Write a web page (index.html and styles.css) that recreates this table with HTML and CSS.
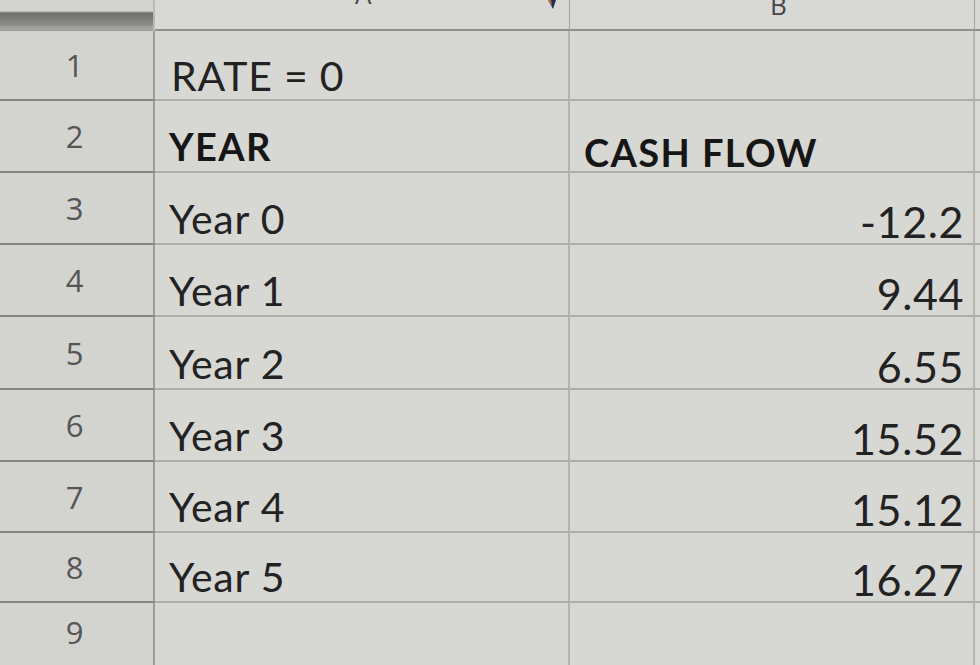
FILE: index.html
```html
<!DOCTYPE html>
<html lang="en">
<head>
<meta charset="utf-8">
<title>Sheet</title>
<link rel="stylesheet" href="styles.css">
</head>
<body>
<div class="sheet">
  <div class="corner"></div>
  <div class="colhead"><span class="col-letter a">A</span>
    <svg class="cursor" width="50" height="12" viewBox="0 0 50 12"><path d="M0 0 L8 0 L5 9 Z" fill="#1f2f5a"/><path d="M0 0 L3 0 L4 6 Z" fill="#c8742a"/><path d="M38 0 L48 0 L40 9 Z" fill="#1f2f5a"/></svg>
  </div>
  <div class="colhead"><span class="col-letter b">B</span></div>
  <div class="colhead edge"></div>

  <div class="rowhead r1">1</div>
  <div class="cell r1 text">RATE = 0</div>
  <div class="cell r1"></div>
  <div class="cell r1 edge"></div>

  <div class="rowhead r2">2</div>
  <div class="cell r2 text bold">YEAR</div>
  <div class="cell r2 text bold cash">CASH FLOW</div>
  <div class="cell r2 edge"></div>

  <div class="rowhead r3">3</div>
  <div class="cell r3 text">Year 0</div>
  <div class="cell r3 num">-12.2</div>
  <div class="cell r3 edge"></div>

  <div class="rowhead r4">4</div>
  <div class="cell r4 text">Year 1</div>
  <div class="cell r4 num">9.44</div>
  <div class="cell r4 edge"></div>

  <div class="rowhead r5">5</div>
  <div class="cell r5 text">Year 2</div>
  <div class="cell r5 num">6.55</div>
  <div class="cell r5 edge"></div>

  <div class="rowhead r6">6</div>
  <div class="cell r6 text">Year 3</div>
  <div class="cell r6 num">15.52</div>
  <div class="cell r6 edge"></div>

  <div class="rowhead r7">7</div>
  <div class="cell r7 text">Year 4</div>
  <div class="cell r7 num">15.12</div>
  <div class="cell r7 edge"></div>

  <div class="rowhead r8">8</div>
  <div class="cell r8 text">Year 5</div>
  <div class="cell r8 num">16.27</div>
  <div class="cell r8 edge"></div>

  <div class="rowhead r9">9</div>
  <div class="cell r9"></div>
  <div class="cell r9"></div>
  <div class="cell r9 edge"></div>
</div>
</body>
</html>
```

FILE: styles.css
```css
html, body {
  margin: 0;
  padding: 0;
  width: 980px;
  height: 665px;
  overflow: hidden;
  background: #d6d6d3;
}

.sheet {
  display: grid;
  grid-template-columns: 155px 415px 405px 5px;
  grid-template-rows: 31px 70px 72px 72px 72px 73px 72px 71px 70px 62px;
  width: 980px;
  height: 665px;
  font-family: Lato, "Open Sans", sans-serif;
  color: #222;
}

.corner {
  background: linear-gradient(to bottom, #d3d3d0 0, #d3d3d0 11px, #6e6e6c 13px, #8a8a88 24px, #a8a8a5 29px, #9a9a98 31px);
  border-right: 2px solid #b9b9b6;
}

.colhead {
  position: relative;
  overflow: hidden;
  background: #d8d8d5;
  border-bottom: 2px solid #8f8f8c;
  border-right: 1px solid #a3a3a0;
}

.colhead.edge {
  border-right: none;
}

.col-letter {
  position: absolute;
  font-family: "Open Sans", sans-serif;
  font-size: 26px;
  color: #444;
  line-height: 1;
}

.col-letter.a {
  left: 200px;
  top: -19px;
}

.col-letter.b {
  left: 200px;
  top: -8px;
}

.cursor {
  position: absolute;
  left: 393px;
  top: 0;
}

.rowhead {
  display: flex;
  align-items: center;
  justify-content: center;
  padding-right: 4px;
  background: #d3d3d0;
  border-bottom: 2px solid #858583;
  border-right: 2px solid #9c9c99;
  font-family: "Open Sans", sans-serif;
  font-size: 31px;
  color: #555;
}

.rowhead.r9 {
  border-bottom: none;
  align-items: flex-start;
  padding-top: 8px;
}

.cell {
  display: flex;
  align-items: flex-end;
  background: #d7d7d4;
  border-bottom: 2px solid #adadaa;
  border-right: 2px solid #b3b3b0;
  font-size: 41px;
  letter-spacing: 0.8px;
  line-height: 1;
  padding-bottom: 4px;
  box-sizing: border-box;
}

.cell.r9 {
  border-bottom: none;
}

.cell.edge {
  border-right: none;
  background: #dadad7;
}

.text {
  padding-left: 14px;
}

.r1.text {
  padding-left: 16px;
  padding-bottom: 3px;
}

.bold {
  font-weight: 700;
  font-size: 38px;
  letter-spacing: 1.4px;
  color: #161616;
  padding-bottom: 6px;
}

.cash {
  padding-left: 14px;
  padding-bottom: 0;
}

.num {
  justify-content: flex-end;
  padding-right: 9px;
  padding-bottom: 0;
  font-size: 43px;
  letter-spacing: 0.6px;
}
```
